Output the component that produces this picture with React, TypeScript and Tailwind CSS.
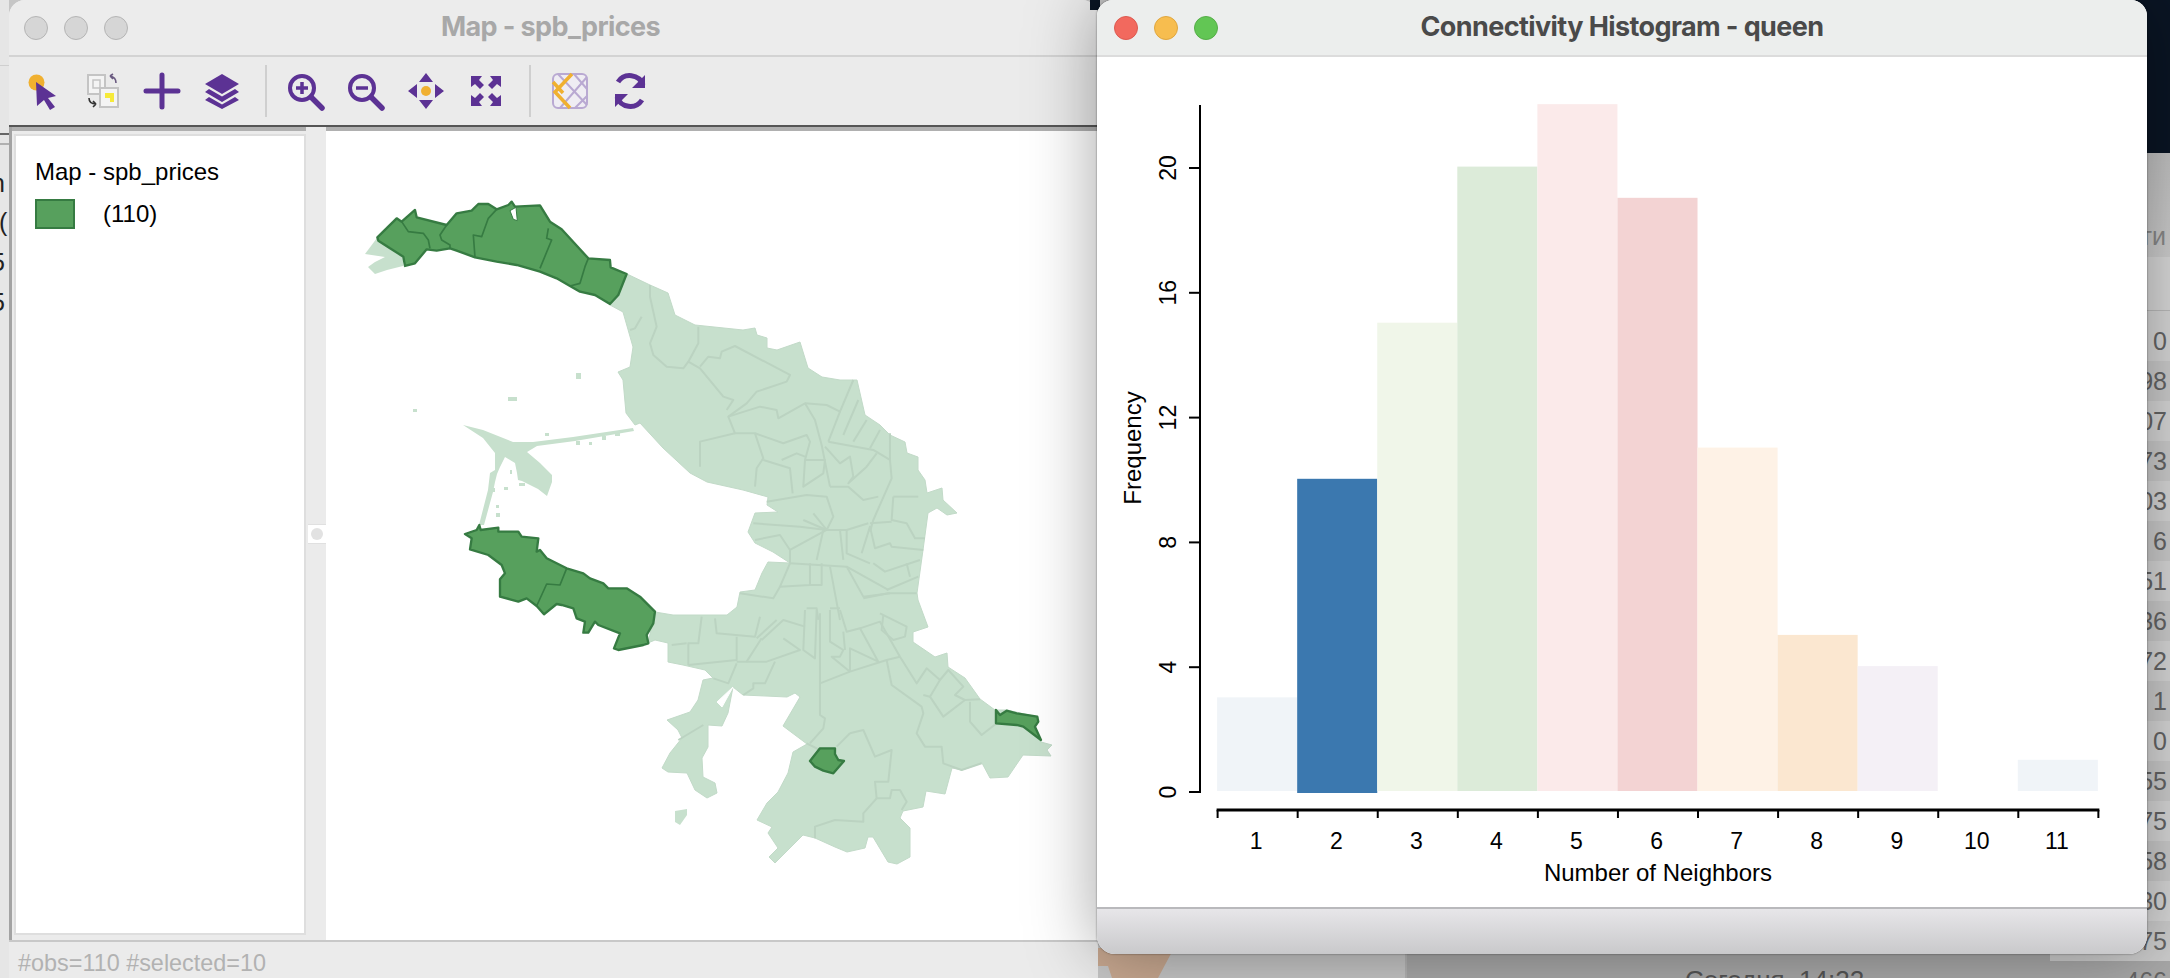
import React from "react";

// polygons are traced in the coordinates of the zoom crops, the groups below scale them back
const purple = "#5c3294";
const orange = "#f0b030";

const northDark = "112,172 170,115 185,125 225,90 230,112 320,135 350,100 395,92 415,72 445,72 470,88 505,75 515,65 525,80 600,76 630,125 665,148 745,235 810,240 812,262 860,282 835,345 810,372 765,345 720,335 690,318 650,295 600,275 530,255 470,245 405,232 350,212 330,205 290,212 260,208 225,250 195,258 190,230 150,205 115,182";
const northInner = [
  "185,125 205,155 250,160 265,180 270,205",
  "320,135 300,165 305,180 330,195 330,207",
  "470,88 445,115 425,170 400,165 405,232",
  "625,145 620,175 635,180 600,265",
  "745,235 735,260 720,310 690,318",
];
const westDark = "75,162 110,150 118,135 122,150 175,143 175,155 235,155 245,170 295,175 290,215 300,210 320,235 380,265 430,280 450,295 490,310 505,325 560,325 600,350 645,395 640,430 620,465 625,490 610,495 535,510 522,505 540,460 475,435 465,425 445,458 430,458 435,425 410,415 400,385 365,375 350,372 312,403 290,378 260,355 235,365 210,358 180,350 180,298 195,280 185,255 145,225 90,208 95,175";

const mainBody = "627,274 650,285 668,293 675,315 695,325 743,330 755,328 757,335 767,338 767,348 777,350 800,342 808,368 822,377 840,380 857,380 865,415 880,425 890,435 905,442 907,453 918,457 918,470 925,480 927,493 942,488 943,500 957,513 947,515 937,508 928,513 923,550 917,593 918,600 928,627 913,632 913,642 935,657 947,653 948,667 965,678 980,699 995,710 1007,710 1038,717 1035,727 1041,742 1052,745 1047,750 1051,756 1023,755 1008,777 990,778 982,763 962,770 952,768 945,794 926,791 923,807 903,811 900,818 910,828 910,857 897,864 888,862 873,837 868,837 865,848 847,852 835,847 815,838 803,835 775,863 769,857 778,848 768,833 772,827 757,820 767,803 778,792 788,773 793,752 807,744 783,726 800,697 795,693 787,697 743,695 733,687 728,713 722,726 708,725 708,747 702,758 703,777 715,783 717,793 707,798 695,790 687,773 668,772 662,768 670,753 682,738 678,730 667,720 690,712 698,700 703,680 713,678 705,670 683,665 668,662 668,643 655,640 648,643 655,612 673,615 727,615 737,607 740,592 755,590 762,573 768,562 790,563 773,552 755,543 748,532 755,513 778,512 767,505 768,497 743,490 707,482 690,473 663,448 640,423 635,425 626,413 623,380 618,372 630,367 633,347 623,312 610,305";
const kronstadt = "463,425 483,430 513,442 533,442 573,437 633,428 634,431 575,441 537,446 527,452 540,463 552,475 552,482 547,496 538,489 522,481 518,480 517,473 515,463 505,457 500,467 497,474 495,482 493,492 484,525 479,525 488,490 490,473 495,470 495,453 483,438";
const westTip = "377,238 365,254 385,257 375,262 368,267 375,274 387,270 403,266 403,257 390,248";

const linesUpper = [
  "175,200 175,250 145,305 180,325 250,410 280,420 260,450",
  "30,75 30,110 50,200 30,250 40,285 80,320 130,325 145,305",
  "5,170 -15,205 -30,210",
  "180,320 205,290 240,295 245,275 285,258 450,345 440,365 350,395 320,430 265,470 285,520 345,520 370,595 350,625 345,680",
  "265,470 360,440 410,450 415,475 495,430 525,480 545,555 570,680",
  "285,520 180,545 180,620",
  "345,520 430,550 500,525 510,545 495,600 490,680 550,640 555,600 495,600",
  "425,600 470,580 495,590",
  "370,600 450,625 458,700",
  "495,430 560,435 600,455 640,360",
  "565,545 600,455",
  "610,525 655,420",
  "640,545 680,480",
  "690,565 720,510",
  "565,545 700,570 750,600 750,520",
  "555,560 600,610 630,590 640,650 625,670 680,620 710,580",
  "750,600 755,655 700,780 690,815",
  "570,680 625,680 670,720 715,710",
  "760,710 835,710",
  "760,710 755,780 800,790 825,835 855,835",
  "690,790 755,785",
  "380,725 500,705 560,710 580,770 560,810",
  "340,790 480,800 560,810",
  "490,780 560,810 620,810 685,790",
  "520,760 560,810",
  "450,870 560,810",
  "530,900 550,810",
  "600,810 610,900",
  "620,810 620,880 690,910",
  "345,840 420,825 450,870 450,910",
  "665,880 690,800 705,865 750,850 755,860 850,870",
  "700,910 735,935 840,900",
  "800,910 810,950",
  "740,990 835,950",
  "450,910 620,920 745,990",
  "620,920 670,1010 750,1000",
  "450,910 420,980 510,975 510,910",
  "545,910 545,975 510,975",
  "570,920 600,1080",
  "500,1045 530,1045 535,1080",
  "570,1045 600,1045",
  "300,1000 400,1015 420,980",
  "830,1000 745,1000 670,1015",
];
const linesLower = [
  "185,50 175,130 145,130 145,195",
  "225,55 230,100 345,110 360,50",
  "290,110 290,180 145,195",
  "365,115 320,185 290,185",
  "350,115 410,60",
  "365,120 430,60 495,80",
  "430,115 480,150 380,185 320,185",
  "495,30 490,150 525,175 530,30",
  "540,40 540,345 555,355 550,385 510,430",
  "290,190 265,250 220,235",
  "405,185 375,250 340,250 340,265 310,285",
  "570,30 570,125 610,150 600,170 575,170 630,215",
  "540,250 630,215 740,180 780,170",
  "740,180 755,255 845,320 850,340 830,400 855,440 905,440 910,490 965,510 1025,490",
  "600,30 620,95 660,85 715,185 630,145 630,215",
  "660,85 720,65 780,170 830,250 860,205 900,240 870,290 910,350 975,300 1020,298",
  "850,285 870,290",
  "900,240 925,210 970,260 945,285 975,300",
  "990,305 990,365 1025,405 1070,370",
  "630,400 670,390 705,470 755,450 745,545 705,545 710,595 750,595 755,570 780,570 800,605 785,630",
  "710,595 670,640 670,665 585,660 525,680 525,715",
  "500,430 540,450",
  "630,400 590,440",
  "190,375 115,420",
  "720,40 800,80 795,110 760,120 725,90 730,45",
  "610,95 615,150",
  "140,130 95,135",
];
const specks: [number, number, number, number][] = [
  [576, 373, 5, 6], [508, 397, 9, 4], [413, 409, 4, 3], [576, 441, 4, 4], [589, 442, 3, 3], [602, 436, 4, 4], [615, 433, 5, 3],
  [545, 433, 4, 3], [492, 488, 3, 4], [504, 487, 4, 3], [519, 483, 6, 3], [496, 505, 3, 3], [496, 513, 4, 4], [510, 470, 2, 4],
];

const bars = [
  { n: 1, v: 3, c: "#f0f4f8" },
  { n: 2, v: 10, c: "#3b78af" },
  { n: 3, v: 15, c: "#f0f6e9" },
  { n: 4, v: 20, c: "#dcebd9" },
  { n: 5, v: 22, c: "#fbeaea" },
  { n: 6, v: 19, c: "#f3d3d3" },
  { n: 7, v: 11, c: "#fef2e6" },
  { n: 8, v: 5, c: "#fbe7d0" },
  { n: 9, v: 4, c: "#f4f0f6" },
  { n: 10, v: 0, c: "#ffffff" },
  { n: 11, v: 1, c: "#f0f4f8" },
];
const rightDigits = ["0", "98", "07", "73", "03", "6", "51", "36", "72", "1", "0", "55", "75", "58", "30", "75"];

function ToolIcon({ children }: { children: React.ReactNode }) {
  return (
    <div className="flex h-full w-[60px] shrink-0 items-center justify-center">
      <svg width="44" height="44" viewBox="0 0 44 44" fill="none" className="overflow-visible blur-[0.6px]">
        {children}
      </svg>
    </div>
  );
}

function Toolbar() {
  return (
    <div className="flex h-[68px] items-center bg-[#ebebeb] pl-[3px]">
      <ToolIcon>
        <circle cx="16.5" cy="13.5" r="8" fill={orange} />
        <path d="M16 13 L36 27 L28 29 L35 38 L30 41 L24 31 L17 37 Z" fill={purple} />
      </ToolIcon>
      <ToolIcon>
        <rect x="8" y="6" width="17" height="19" fill="#f4f4f4" stroke="#c4c4c4" strokeWidth="2" />
        <rect x="13" y="11" width="7" height="8" fill="none" stroke="#c4c4c4" strokeWidth="1.5" />
        <rect x="20" y="19" width="18" height="19" fill="#f4f4f4" stroke="#c4c4c4" strokeWidth="2" />
        <path d="M25 24 H34 V33 H30 V29 H25 Z" fill="#f6ea3a" />
        <path d="M30 7 Q36 8 36 14 M30 7 L33 5 M30 7 L33 10" stroke="#6a5a80" strokeWidth="1.6" />
        <path d="M9 29 Q9 35 16 35 M16 35 L13 32 M16 35 L13 38" stroke="#333" strokeWidth="1.6" />
      </ToolIcon>
      <ToolIcon>
        <path d="M22 6 V38 M6 22 H38" stroke={purple} strokeWidth="5" strokeLinecap="round" />
      </ToolIcon>
      <ToolIcon>
        <path d="M22 5 L39 15 L22 25 L5 15 Z" fill={purple} />
        <path d="M9 20 L5 23 L22 33 L39 23 L35 20 L22 27.5 Z" fill={purple} />
        <path d="M9 28 L5 31 L22 40 L39 31 L35 28 L22 35.5 Z" fill={purple} />
      </ToolIcon>
      <div className="ml-[13px] mr-[5px] h-[52px] w-[2px] bg-[#cfcfcf]" />
      <ToolIcon>
        <circle cx="22" cy="19" r="12" stroke={purple} strokeWidth="4" />
        <path d="M22 13 V25 M16 19 H28" stroke={purple} strokeWidth="3.5" />
        <path d="M31 28 L42 39" stroke={purple} strokeWidth="5.5" strokeLinecap="round" />
      </ToolIcon>
      <ToolIcon>
        <circle cx="22" cy="19" r="12" stroke={purple} strokeWidth="4" />
        <path d="M16 19 H28" stroke={purple} strokeWidth="3.5" />
        <path d="M31 28 L42 39" stroke={purple} strokeWidth="5.5" strokeLinecap="round" />
      </ToolIcon>
      <div className="w-[4px] shrink-0" />
      <ToolIcon>
        <circle cx="22" cy="22" r="5" fill={orange} />
        <path d="M22 4 L29 13 H15 Z M22 40 L29 31 H15 Z M4 22 L13 15 V29 Z M40 22 L31 15 V29 Z" fill={purple} />
      </ToolIcon>
      <ToolIcon>
        <path d="M7 7 H18 L15 11 L20 16 L16 20 L11 15 L7 18 Z M37 7 H26 L29 11 L24 16 L28 20 L33 15 L37 18 Z M7 37 H18 L15 33 L20 28 L16 24 L11 29 L7 26 Z M37 37 H26 L29 33 L24 28 L28 24 L33 29 L37 26 Z" fill={purple} />
      </ToolIcon>
      <div className="ml-[13px] mr-[9px] h-[52px] w-[2px] bg-[#cfcfcf]" />
      <ToolIcon>
        <rect x="5" y="5" width="34" height="34" rx="5" fill="#efedf3" stroke="#b9a9d2" strokeWidth="2" />
        <path d="M10 5 L39 36 M39 8 L12 39 M26 5 L39 20 M27 39 L39 27" stroke="#b9a9d2" strokeWidth="2" />
        <path d="M24 5 L7 23 L22 39 M5 13 L15 24" stroke={orange} strokeWidth="3.5" />
      </ToolIcon>
      <ToolIcon>
        <path d="M35 16 A14 14 0 0 0 10 13" stroke={purple} strokeWidth="5" />
        <path d="M9 28 A14 14 0 0 0 34 31" stroke={purple} strokeWidth="5" />
        <path d="M37 6 V19 H24 Z M7 38 V25 H20 Z" fill={purple} />
      </ToolIcon>
    </div>
  );
}

function TrafficLight({ className }: { className: string }) {
  return <div className={`size-[24px] rounded-full border ${className}`} />;
}

function MapCanvas() {
  return (
    <svg viewBox="326 131 772 809" className="h-full w-full" fill="none">
      <polygon points={mainBody} fill="#c7e0cd" stroke="#c2dac8" strokeWidth="1" strokeLinejoin="round" />
      <polygon points={kronstadt} fill="#c7e0cd" />
      <polygon points={westTip} fill="#c7e0cd" />
      <polygon points="675,811 687,809 687,815 680,825 675,822" fill="#c7e0cd" />
      {specks.map(([x, y, w, h], i) => (
        <rect key={i} x={x} y={y} width={w} height={h} fill="#c7e0cd" />
      ))}
      <polyline points="717,702 733,687 722,707 717,702" fill="#ffffff" stroke="#ffffff" strokeWidth="1" />
      <g stroke="#bbd3c1" strokeLinejoin="round">
        <g transform="translate(640 260) scale(0.3333)">
          {linesUpper.map((p) => (
            <polyline key={p} points={p} strokeWidth="6" />
          ))}
        </g>
        <g transform="translate(640 600) scale(0.3333)">
          {linesLower.map((p) => (
            <polyline key={p} points={p} strokeWidth="6" />
          ))}
        </g>
      </g>
      <g fill="#57a05d" stroke="#367b42" strokeWidth="7" strokeLinejoin="round">
        <g transform="translate(340 180) scale(0.3333)">
          <polygon points={northDark} />
          {northInner.map((p) => (
            <polyline key={p} points={p} fill="none" strokeWidth="5" />
          ))}
          <polygon points="510,92 528,82 532,122 520,118" fill="#ffffff" strokeWidth="3" />
        </g>
        <g transform="translate(440 480) scale(0.3333)">
          <polygon points={westDark} />
          <polyline points="380,265 360,315 320,312 290,378" fill="none" strokeWidth="5" />
        </g>
        <g transform="translate(640 600) scale(0.3333)">
          <polygon points="510,483 540,445 585,445 585,462 595,480 612,483 580,520 550,512 525,500" />
          <polygon points="1068,330 1080,345 1100,332 1130,340 1192,350 1195,365 1185,380 1203,420 1150,380 1130,375 1068,370" />
        </g>
      </g>
    </svg>
  );
}

function MapWindow() {
  return (
    <div className="absolute left-[9px] top-0 flex h-[978px] w-[1089px] flex-col overflow-hidden rounded-t-[16px] bg-[#ebebeb] font-['Liberation_Sans',sans-serif]">
      <div className="relative flex h-[57px] shrink-0 items-center gap-[16px] border-b-2 border-[#d3d3d3] bg-[#ececec] pl-[15px]">
        <TrafficLight className="border-[#b4b4b4] bg-[#d6d6d6]" />
        <TrafficLight className="border-[#b4b4b4] bg-[#d6d6d6]" />
        <TrafficLight className="border-[#b4b4b4] bg-[#d6d6d6]" />
        <div className="absolute inset-0 flex items-center justify-center pr-[6px] font-['Inter',sans-serif] text-[27px] font-bold tracking-[-0.6px] text-[#a8a8a8]">
          Map - spb_prices
        </div>
      </div>
      <Toolbar />
      <div className="h-[2px] shrink-0 bg-[#555555]" />
      <div className="flex min-h-0 flex-1 flex-col">
        <div className="flex min-h-0 flex-1 border-l-[3px] border-[#a3a3a3]">
          <div className="flex w-[294px] shrink-0 flex-col">
            <div className="h-[4px] shrink-0 bg-[#b0b0b0]" />
            <div className="mb-[5px] ml-[2px] mt-[3px] flex flex-1 flex-col border-2 border-[#dedede] bg-white pl-[19px] pt-[22px] text-[24px] leading-[28px] text-black">
              <div>Map - spb_prices</div>
              <div className="mt-[13px] flex items-center">
                <div className="h-[30px] w-[40px] border-2 border-[#367b42] bg-[#57a05d]" />
                <div className="ml-[28px]">(110)</div>
              </div>
            </div>
          </div>
          <div className="relative w-[20px] shrink-0">
            <div className="absolute left-[2px] right-0 top-[397px] flex h-[20px] items-center justify-center border-y border-[#e0e0e0] bg-white">
              <div className="size-[12px] rounded-full bg-[#e2e2e2]" />
            </div>
          </div>
          <div className="flex min-h-0 flex-1 flex-col">
            <div className="h-[4px] shrink-0 bg-[#b0b0b0]" />
            <div className="min-h-0 flex-1 bg-white">
              <MapCanvas />
            </div>
          </div>
        </div>
        <div className="flex h-[38px] shrink-0 items-center border-t-2 border-[#c8c8c8] bg-[#ebebeb] pl-[9px] pt-[8px] text-[23.4px] text-[#b2b2b2]">
          #obs=110 #selected=10
        </div>
      </div>
    </div>
  );
}

function Histogram() {
  const unit = 31.22;
  const binW = 80.07;
  const left = 218.6;
  const zero = 791;
  return (
    <svg viewBox="98 57 1050 850" className="h-full w-full font-['Liberation_Sans',sans-serif]">
      {bars.map((b, i) =>
        b.v > 0 ? (
          <rect
            key={b.n}
            x={left - 0.5 + i * binW}
            y={zero - b.v * unit}
            width={binW}
            height={b.v * unit + (b.n === 2 ? 2 : 0)}
            fill={b.c}
          />
        ) : null
      )}
      <path d="M201 105 V793" stroke="#000" strokeWidth="2" />
      {[0, 4, 8, 12, 16, 20].map((v) => {
        const y = 792 - v * 31.2;
        return (
          <g key={v}>
            <path d={`M190 ${y} H201`} stroke="#000" strokeWidth="2" />
            <text transform={`translate(177 ${y}) rotate(-90)`} textAnchor="middle" fontSize="23" fill="#000">
              {v}
            </text>
          </g>
        );
      })}
      <text transform="translate(142 448) rotate(-90)" textAnchor="middle" fontSize="24" fill="#000">
        Frequency
      </text>
      <path d={`M${left - 1} 810 H${left + 11 * binW + 1}`} stroke="#000" strokeWidth="3" />
      {Array.from({ length: 12 }, (_, i) => (
        <path key={i} d={`M${left + i * binW} 810 V818`} stroke="#000" strokeWidth="2" />
      ))}
      {bars.map((b, i) => (
        <text key={b.n} x={left + (i + 0.5) * binW - 1.4} y="849" textAnchor="middle" fontSize="23" fill="#000">
          {b.n}
        </text>
      ))}
      <text x="659" y="881" textAnchor="middle" fontSize="24" fill="#000">
        Number of Neighbors
      </text>
    </svg>
  );
}

function HistogramWindow() {
  return (
    <div className="absolute left-[1097px] top-0 flex h-[954px] w-[1050px] flex-col overflow-hidden rounded-b-[18px] rounded-t-[16px] bg-white shadow-[0_0_2px_rgba(0,0,0,0.55),0_0_70px_rgba(0,0,0,0.36)]">
      <div className="relative flex h-[57px] shrink-0 items-center gap-[16px] border-b-2 border-[#dcdcdc] bg-[#eceeed] pl-[17px]">
        <TrafficLight className="border-[#dc5a50] bg-[#f2695e]" />
        <TrafficLight className="border-[#dfa63f] bg-[#f7bd4f]" />
        <TrafficLight className="border-[#55ad48] bg-[#62c654]" />
        <div className="absolute inset-0 flex items-center justify-center font-['Inter',sans-serif] text-[27px] font-bold tracking-[-0.6px] text-[#4a4a4a]">
          Connectivity Histogram - queen
        </div>
      </div>
      <div className="min-h-0 flex-1">
        <Histogram />
      </div>
      <div className="h-[47px] shrink-0 border-t-2 border-[#b9b9bc] bg-gradient-to-b from-[#e7e6e9] to-[#c9c9cb]" />
    </div>
  );
}

function Backdrop() {
  return (
    <div className="absolute inset-0 bg-[#c6c6c6] font-['Liberation_Sans',sans-serif]">
      {/* app on the left edge */}
      <div className="absolute left-0 top-0 h-full w-[9px] overflow-hidden bg-[#e6e6e6] text-[25px] leading-none text-[#222]">
        <div className="h-[66px] border-b border-[#cfcfcf]" />
        <div className="h-[69px] border-b-2 border-[#666]" />
        <div className="h-[10px] border-b-2 border-[#b0b0b0]" />
        <div className="ml-[-9px] mt-[26px]">n</div>
        <div className="ml-[-1px] mt-[14px]">(</div>
        <div className="ml-[-9px] mt-[15px]">5</div>
        <div className="ml-[-9px] mt-[15px]">5</div>
      </div>
      {/* table on the right edge, mostly covered by the histogram window */}
      <div className="absolute left-[2050px] top-0 h-full w-[120px] overflow-hidden text-[25px] leading-none text-[#666]">
        <div className="h-[153px] bg-[#0a1524]" />
        <div className="flex h-[104px] items-end justify-end bg-gradient-to-b from-[#c2c2c2] to-[#cfcfcf] pb-[8px] pr-[4px] text-[#8a8a8a]">ти</div>
        <div className="h-[54px] border-b border-[#bcbcbc] bg-[#dadada]" />
        <div className="h-[10px] bg-[#d8d8d8]" />
        {rightDigits.map((d, i) => (
          <div key={i} className={`flex h-[40px] items-center justify-end pr-[3px] ${i % 2 === 0 ? "bg-[#d8d8d8]" : "bg-[#cdcdcd]"}`}>
            {d}
          </div>
        ))}
        <div className="flex h-[40px] items-center justify-end bg-[#a9a9a9] pr-[3px]">466</div>
      </div>
      {/* strip below the windows */}
      <div className="absolute bottom-0 left-[1098px] flex h-[30px] w-[952px]">
        <div className="w-[309px] border-r-2 border-[#b4b4b4] bg-[#c6c6c6]">
          <svg width="90" height="30" viewBox="0 0 90 30">
            <polygon points="0,0 76,0 60,30 14,30 10,18 0,18" fill="#c8a890" />
          </svg>
        </div>
        <div className="flex-1 overflow-hidden bg-[#a9a9a9] pl-[278px] pt-[19px] text-[26px] leading-none text-[#555]">Сегодня, 14:22</div>
      </div>
    </div>
  );
}

export default function App() {
  return (
    <div className="relative h-[978px] w-[2170px] overflow-hidden">
      <Backdrop />
      <MapWindow />
      <div className="absolute left-[1090px] top-0 h-[10px] w-[10px] bg-[#0a1524]" />
      <HistogramWindow />
    </div>
  );
}
